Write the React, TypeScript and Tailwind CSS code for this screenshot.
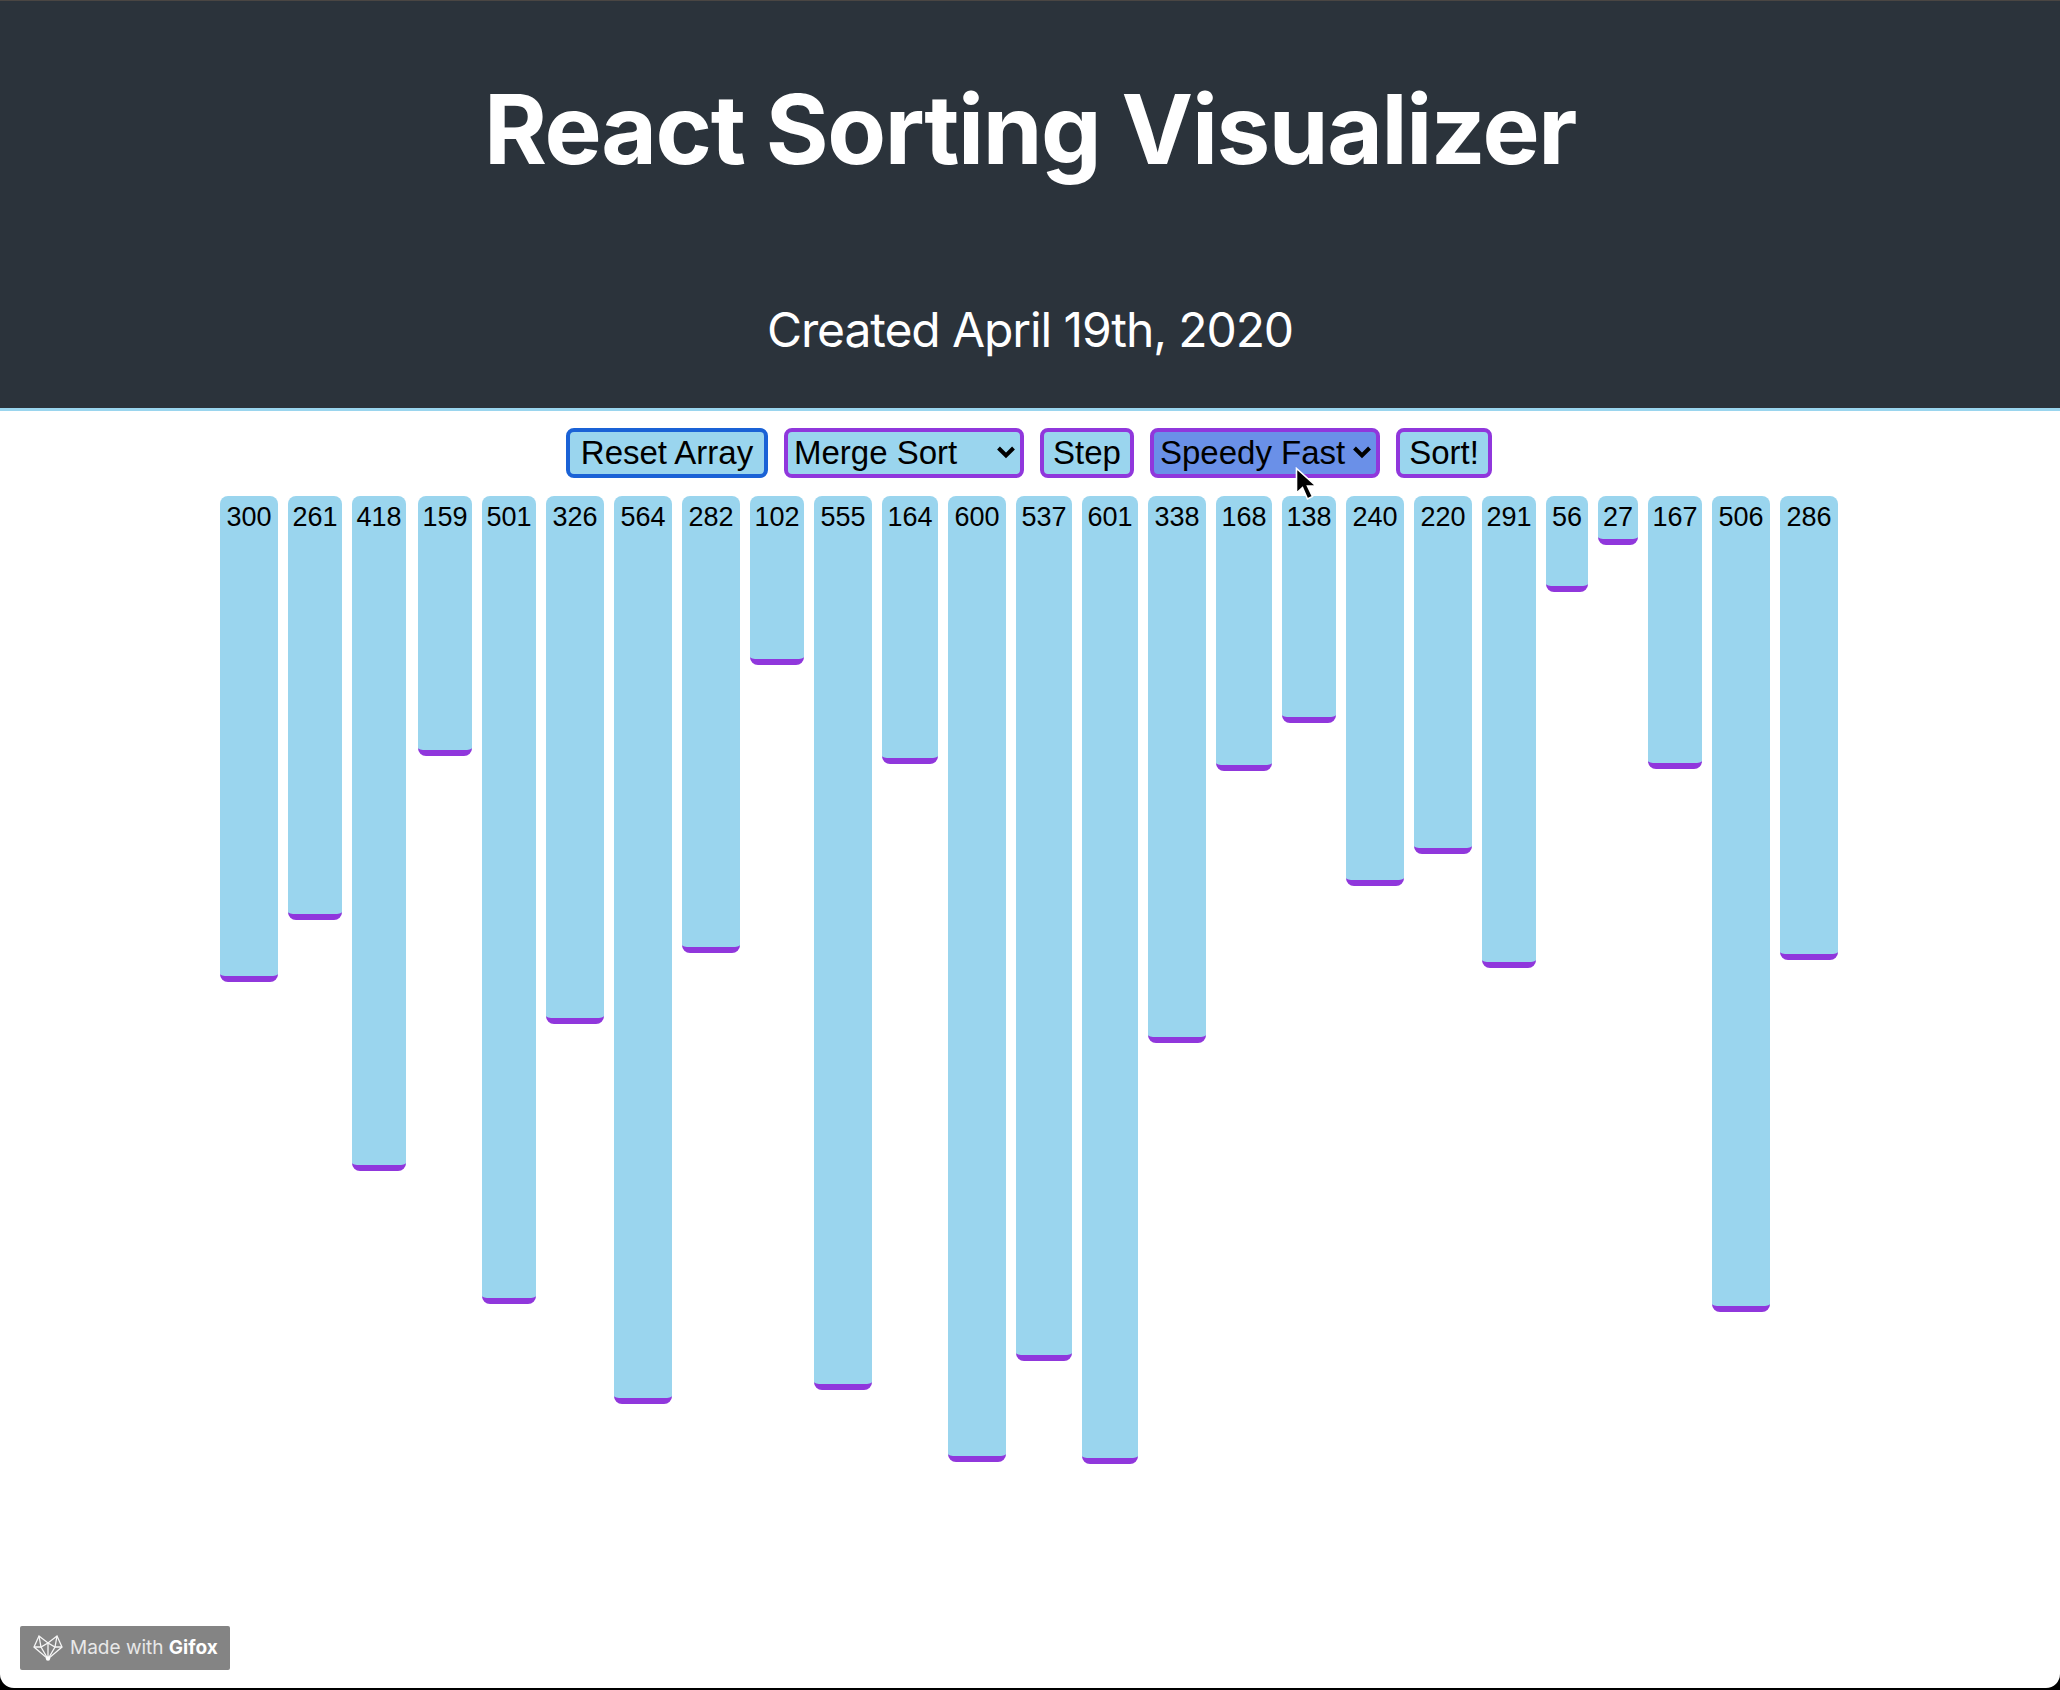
import React from "react";

const bars = [
    { value: 300, width: 58 },
    { value: 261, width: 54 },
    { value: 418, width: 54 },
    { value: 159, width: 54, extra: "ml-[2px]" },
    { value: 501, width: 54 },
    { value: 326, width: 58 },
    { value: 564, width: 58 },
    { value: 282, width: 58 },
    { value: 102, width: 54 },
    { value: 555, width: 58 },
    { value: 164, width: 56 },
    { value: 600, width: 58 },
    { value: 537, width: 56 },
    { value: 601, width: 56 },
    { value: 338, width: 58 },
    { value: 168, width: 56 },
    { value: 138, width: 54 },
    { value: 240, width: 58 },
    { value: 220, width: 58 },
    { value: 291, width: 54 },
    { value: 56, width: 42 },
    { value: 27, width: 40 },
    { value: 167, width: 54 },
    { value: 506, width: 58 },
    { value: 286, width: 58 },
];

const Chevron = () => (
    <svg
        className="pointer-events-none absolute top-[17px] right-[8px] h-[14px] w-[20px]"
        viewBox="0 0 20 14"
        fill="none"
    >
        <path d="M2.5 3 10 10.5 17.5 3" stroke="#000" strokeWidth="4" />
    </svg>
);

const FoxLogo = () => (
    <svg className="h-[26px] w-[30px]" viewBox="0 0 30 26" fill="none" stroke="#f6f6f6" strokeWidth="1.3">
        <path d="M6 1 1 12 15 24 29 12 24 1 15 8Z" />
        <path d="M6 1 8 12 15 24 22 12 24 1" />
        <path d="M1 12 8 12 15 8 22 12 29 12" />
        <path d="M15 8 15 24" />
        <circle cx="15" cy="23.5" r="2.2" fill="#fff" stroke="none" />
    </svg>
);

const Cursor = () => (
    <svg className="absolute top-[467px] left-[1295px] z-10 h-[36px] w-[24px]" viewBox="0 0 24 36">
        <path
            d="M1.5 1.5 1.5 26 7.5 20.5 12.5 32 17.5 29.5 12.5 19 21 19Z"
            fill="#000"
            stroke="#fff"
            strokeWidth="1.6"
        />
    </svg>
);

const App = () => {
    return (
        <div className="h-[1690px] w-[2060px] overflow-hidden bg-black font-['Liberation_Sans',sans-serif]">
            <div className="relative h-[1688px] overflow-hidden rounded-b-[14px] bg-white">
                <header className="h-[411px] border-t border-b-[3px] border-t-[#4a4643] border-b-[#9ad5ee] bg-[#2b333b] text-center text-white">
                    <h1 className="pt-[73px] font-['Inter',sans-serif] text-[96px] leading-[110px] font-bold tracking-[-1.4px]">
                        React Sorting Visualizer
                    </h1>
                    <p className="mt-[117px] font-['Inter',sans-serif] text-[48px] leading-[58px] tracking-[-1.1px]">
                        Created April 19th, 2020
                    </p>
                </header>

                <div className="mt-[17px] flex h-[50px] justify-center gap-4 pr-[2px] text-[33px] leading-[38px] text-black">
                    <button className="w-[202px] rounded-lg border-[4px] border-[#1a62d6] bg-[#9ad5ee]">Reset Array</button>
                    <div className="relative w-[240px]">
                        <select className="h-full w-full appearance-none rounded-lg border-[4px] border-[#9037dc] bg-[#9ad5ee] pl-[6px]">
                            <option>Merge Sort</option>
                        </select>
                        <Chevron />
                    </div>
                    <button className="w-[94px] rounded-lg border-[4px] border-[#9037dc] bg-[#9ad5ee]">Step</button>
                    <div className="relative w-[230px]">
                        <select className="h-full w-full appearance-none rounded-lg border-[4px] border-[#9037dc] bg-[#6a90e8] pl-[6px]">
                            <option>Speedy Fast</option>
                        </select>
                        <Chevron />
                    </div>
                    <button className="w-[96px] rounded-lg border-[4px] border-[#9037dc] bg-[#9ad5ee]">Sort!</button>
                </div>

                <div className="mt-[18px] flex items-start justify-center gap-[10px] pr-[2px]">
                    {bars.map((bar) => (
                        <div
                            key={bar.value}
                            className={`shrink-0 rounded-lg border-b-[6px] border-[#9037dc] bg-[#9ad5ee] pt-[5px] text-center text-[27px] leading-[32px] text-black ${bar.extra ?? ""}`}
                            style={{ width: bar.width, height: bar.value * 1.6 + 6 }}
                        >
                            {bar.value}
                        </div>
                    ))}
                </div>

                <Cursor />

                <div className="absolute top-[1626px] left-[20px] flex h-[44px] w-[210px] items-center gap-[7px] rounded-[2px] bg-[#848484] pl-[13px] font-['Inter',sans-serif] text-[19px] text-[#e8e8e8]">
                    <FoxLogo />
                    <span>
                        Made with <b className="font-bold text-white">Gifox</b>
                    </span>
                </div>
            </div>
        </div>
    );
};

export default App;
